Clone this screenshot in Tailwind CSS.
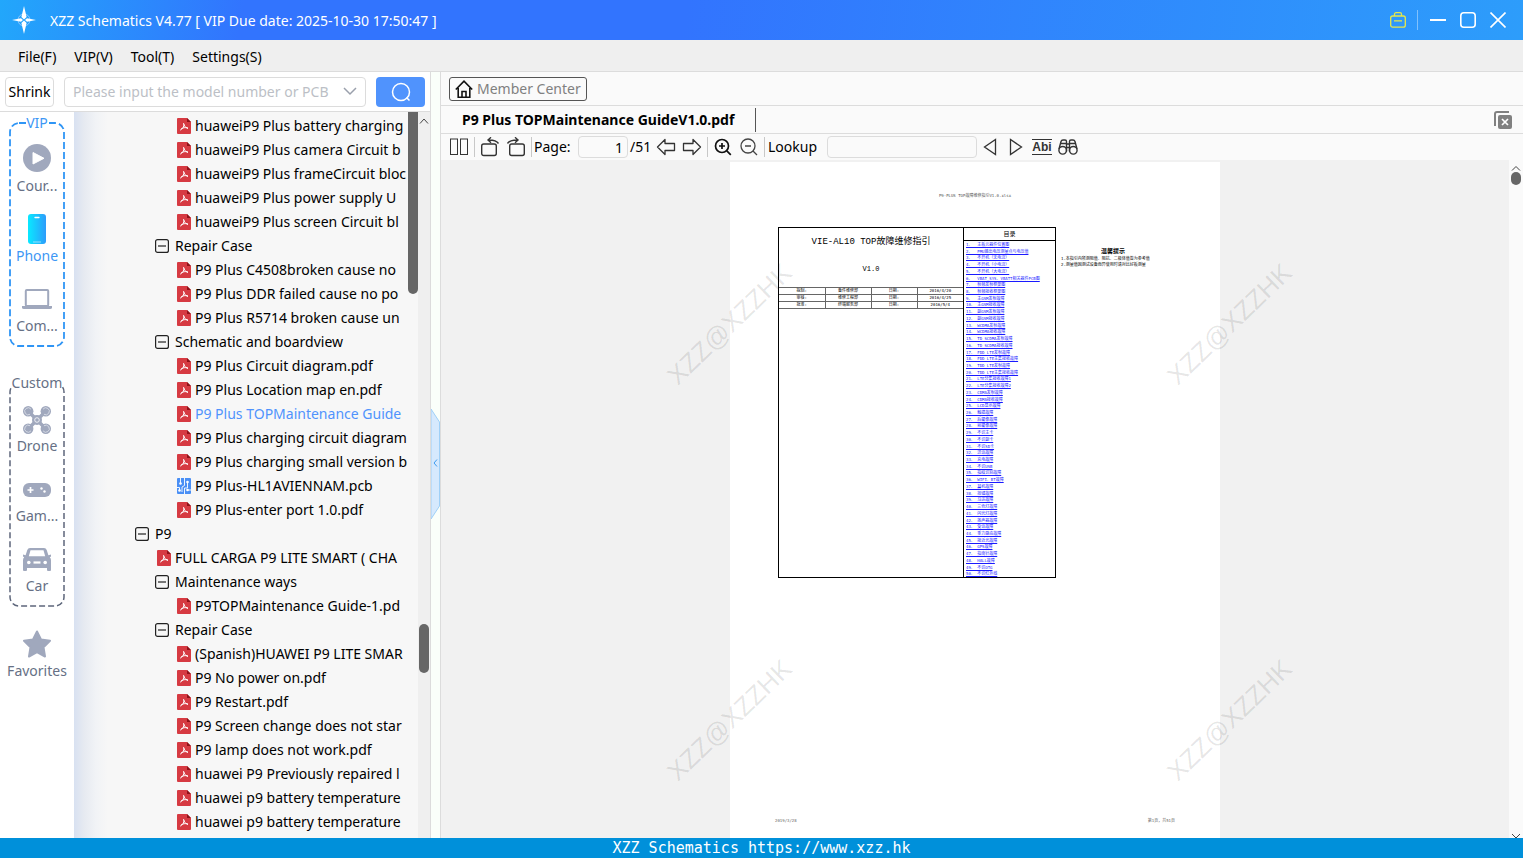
<!DOCTYPE html>
<html lang="en">
<head>
  <meta charset="UTF-8" />
  <title>XZZ Schematics V4.77</title>
  <meta name="viewport" content="width=device-width, initial-scale=1" />
  <script src="https://cdn.jsdelivr.net/npm/@tailwindcss/browser@4"></script>
</head>
<body class="h-screen flex flex-col overflow-hidden bg-[#fafafa] text-black text-[14px] leading-5 font-['Noto_Sans','Noto_Sans_CJK_SC',sans-serif]">

  <!-- Shared icons -->
  <svg class="hidden">
    <symbol id="pdf" viewBox="0 0 14 16">
      <path d="M1 0h9l4 4v11a1 1 0 0 1-1 1H1a1 1 0 0 1-1-1V1a1 1 0 0 1 1-1z" fill="#d63a42" />
      <path d="M10 0l4 4h-4z" fill="#8e1219" />
      <path d="M6.600 5.500c.6 2.200 1 3.300 4 5M7 6.500c.2 2-1.400 4.500-3.500 5.500M4.500 10.600c1.500-.9 3.500-1.200 6-.9" fill="none" stroke="#fff" stroke-width="1" stroke-linecap="round" />
    </symbol>
    <symbol id="pcb" viewBox="0 0 14 16">
      <rect width="14" height="16" rx="1" fill="#4a8ff5" />
      <path d="M3.500 0v5.500M7.500 0v7.500L5 9v5M0 9.500h2.500V12M10.500 4.500V10H7.500v6M14 12h-3.500" fill="none" stroke="#fff" stroke-width=".9" />
      <g fill="#fff"><circle cx="3.500" cy="5.500" r="1.300" /><circle cx="10.500" cy="4" r="1.300" /><circle cx="2.500" cy="12.500" r="1.300" /><circle cx="10.500" cy="12" r="1.300" /></g>
    </symbol>
    <symbol id="minus" viewBox="0 0 14 14">
      <rect x=".6" y=".6" width="12.800" height="12.800" rx="2" fill="none" stroke="#222" stroke-width="1.200" />
      <path d="M3 7h8" stroke="#222" stroke-width="1.200" />
    </symbol>
  </svg>

  <!-- Title bar -->
  <header class="h-10 shrink-0 flex items-center pl-3 pr-[17px] text-white bg-[linear-gradient(100deg,#22a7fb_0%,#3274fe_16%,#3274fe_45%,#2d9dfb_100%)]">
    <svg class="w-6 h-7 mr-[14px]" viewBox="0 0 24 28">
      <circle cx="12" cy="14" r="6" fill="none" stroke="#8cc8ff" stroke-width="1" />
      <path d="M12 0l2.600 11L12 13.500 9.400 11zM12 28l2.600-11L12 14.500 9.400 17zM0 14l9-1.800L11 14l-2 1.800zM24 14l-9-1.800L13 14l2 1.800z" fill="#fff" />
    </svg>
    <h1 class="pt-[2px]">XZZ Schematics V4.77 [ VIP Due date: 2025-10-30 17:50:47 ]</h1>
    <div class="ml-auto flex items-center">
      <button aria-label="Toolbox">
        <svg class="w-4 h-4" viewBox="0 0 16 16" fill="none" stroke="#e6e84a" stroke-width="1.300"><rect x=".7" y="4" width="14.600" height="11.200" rx="2" /><path d="M4.500 4V2.200a1.500 1.500 0 0 1 1.500-1.500h4a1.500 1.500 0 0 1 1.500 1.500V4M4 8.800h8" /></svg>
      </button>
      <span class="w-px h-5 ml-[11px] mr-3 bg-white/40"></span>
      <button aria-label="Minimize"><svg class="w-4 h-4" viewBox="0 0 16 16"><path d="M0 8h16" stroke="#fff" stroke-width="2" /></svg></button>
      <button aria-label="Maximize" class="ml-[14px]"><svg class="w-4 h-4" viewBox="0 0 16 16"><rect x=".8" y=".8" width="14.400" height="14.400" rx="3" fill="none" stroke="#fff" stroke-width="1.600" /></svg></button>
      <button aria-label="Close" class="ml-[14px]"><svg class="w-4 h-4" viewBox="0 0 16 16"><path d="M.5.5l15 15M15.500.5l-15 15" stroke="#fff" stroke-width="1.600" /></svg></button>
    </div>
  </header>

  <!-- Menu bar -->
  <nav class="h-8 shrink-0 flex items-center gap-[18px] px-[18px] pt-[2px] bg-[#efefef] border-b border-[#dcdcdc]">
    <button>File(F)</button>
    <button>VIP(V)</button>
    <button>Tool(T)</button>
    <button>Settings(S)</button>
  </nav>

  <main class="flex-1 min-h-0 flex">

    <!-- Left panel -->
    <section class="w-[431px] shrink-0 flex flex-col border-r border-[#dcdcdc] bg-white">
      <form class="h-10 shrink-0 flex items-center px-[5px] border-b border-[#dcdcdc]">
        <button type="button" class="w-[49px] h-[30px] border border-[#dcdcdc] rounded">Shrink</button>
        <div class="ml-[10px] w-[302px] h-[30px] flex items-center border border-[#dcdcdc] rounded px-2">
          <input type="text" aria-label="Model number or PCB" placeholder="Please input the model number or PCB" class="w-[266px] h-6 outline-none placeholder:text-[#bcbfc6]" />
          <button type="button" aria-label="History" class="ml-auto"><svg class="w-[14px] h-4" viewBox="0 0 14 16"><path d="M1 4l6 6 6-6" fill="none" stroke="#9aa0ac" stroke-width="1.500" /></svg></button>
        </div>
        <button type="button" aria-label="Search" class="ml-auto w-[49px] h-[30px] flex items-center justify-center rounded-sm bg-[#5093fd]">
          <svg class="w-5 h-5" viewBox="0 0 20 20" fill="none" stroke="#fff" stroke-width="1.500"><circle cx="10" cy="10" r="8.500" /><path d="M15.500 15.500l3 3" /></svg>
        </button>
      </form>

      <div class="flex-1 min-h-0 flex">
        <!-- Device categories -->
        <aside class="w-[74px] shrink-0 pt-[10px] flex flex-col items-center text-[#667085]">
          <div class="relative w-14 pt-[18px] pb-[11px] flex flex-col items-center gap-[14px]">
            <svg class="absolute inset-0 w-full h-full" viewBox="0 0 56 225"><rect x="1" y="1" width="54" height="223" rx="9" fill="none" stroke="#2f95f5" stroke-width="1.800" stroke-dasharray="7 3" /></svg>
            <span class="absolute -top-[9px] bg-white text-[#3d97f5]">VIP</span>
            <button class="relative flex flex-col items-center">
              <span class="h-9 flex items-center"><svg class="w-7 h-7" viewBox="0 0 28 28"><circle cx="14" cy="14" r="14" fill="#a0a8bd" /><path d="M10 8.500v11.500l11-5.700z" fill="#fff" stroke="#fff" stroke-linejoin="round" /></svg></span>
              <span>Cour...</span>
            </button>
            <button class="relative flex flex-col items-center text-[#3d97f5]">
              <span class="h-9 pt-[2px] flex items-center"><svg class="w-[18px] h-[30px]" viewBox="0 0 18 30"><defs><linearGradient id="ph"><stop stop-color="#09e9ff" /><stop offset="1" stop-color="#2d9cfb" /></linearGradient></defs><rect width="18" height="30" rx="3" fill="url(#ph)" /><path d="M7 3.500h4" stroke="#fff" stroke-width="1.300" stroke-linecap="round" /><path d="M5 28h8" stroke="#b5eaff" stroke-width=".8" /></svg></span>
              <span>Phone</span>
            </button>
            <button class="relative flex flex-col items-center">
              <span class="h-9 pt-[2px] flex items-center"><svg class="w-[30px] h-5" viewBox="0 0 30 20"><rect x="3.800" y="1" width="22.400" height="16" rx="1" fill="none" stroke="#a0a8bd" stroke-width="2" /><path d="M0 17h30v1.500q0 1.500-2 1.500H2q-2 0-2-1.500z" fill="#a0a8bd" /></svg></span>
              <span>Com...</span>
            </button>
          </div>

          <div class="relative w-14 mt-[35px] pt-[18px] pb-[11px] flex flex-col items-center gap-[14px]">
            <svg class="absolute inset-0 w-full h-full" viewBox="0 0 56 225"><rect x="1" y="1" width="54" height="223" rx="9" fill="none" stroke="#5d667b" stroke-width="1.500" stroke-dasharray="6 3" /></svg>
            <span class="absolute -top-[9px] bg-white">Custom</span>
            <button class="relative flex flex-col items-center">
              <span class="h-9 pt-1 flex items-center"><svg class="w-7 h-7" viewBox="0 0 28 28"><path d="M6 6l16 16M22 6L6 22" stroke="#a0a8bd" stroke-width="3.500" /><g fill="#a0a8bd"><circle cx="5.200" cy="5.200" r="5.200" /><circle cx="22.800" cy="5.200" r="5.200" /><circle cx="5.200" cy="22.800" r="5.200" /><circle cx="22.800" cy="22.800" r="5.200" /><circle cx="14" cy="14" r="5" /></g><g fill="none" stroke="#dfe3ec" stroke-width=".8"><path d="M8 3.200A3.500 3.500 0 1 0 7 8.300M20 3.200A3.500 3.500 0 1 1 21 8.300M8 24.800A3.500 3.500 0 1 1 7 19.700M20 24.800A3.500 3.500 0 1 0 21 19.700" /><circle cx="14" cy="14" r="2.300" stroke="#fff" /></g></svg></span>
              <span>Drone</span>
            </button>
            <button class="relative flex flex-col items-center">
              <span class="h-9 pt-1 flex items-center"><svg class="w-7 h-[14px]" viewBox="0 0 28 14"><rect width="28" height="14" rx="6" fill="#a0a8bd" /><path d="M4.500 7h6M7.500 4v6" stroke="#fff" stroke-width="1.700" /><circle cx="18.500" cy="5.500" r="1.200" fill="#fff" /><circle cx="21.500" cy="8.500" r="1.200" fill="#fff" /></svg></span>
              <span>Gam...</span>
            </button>
            <button class="relative flex flex-col items-center">
              <span class="h-9 pt-[2px] flex items-center"><svg class="w-7 h-6" viewBox="0 0 28 24"><path d="M7 1h14q2 0 2.700 2l1.700 5.200 2.600-.7v2l-1.200.8q1.200 1 1.200 3V23q0 1-1 1h-2q-1 0-1-1v-2H4v2q0 1-1 1H1q-1 0-1-1v-9.700q0-2 1.200-3L0 9.500v-2l2.600.7L4.300 3Q5 1 7 1z" fill="#a0a8bd" /><path d="M7.500 3.300h13l1.700 6H5.800z" fill="#fff" /><circle cx="5.800" cy="15.500" r="1.800" fill="#fff" /><circle cx="22.200" cy="15.500" r="1.800" fill="#fff" /><path d="M10.500 15.500h7" stroke="#fff" stroke-width="2.200" /></svg></span>
              <span>Car</span>
            </button>
          </div>

          <button class="mt-[18px] flex flex-col items-center">
            <span class="h-9 pt-[2px] flex items-center"><svg class="w-7 h-7" viewBox="0 0 28 28"><path d="M14 1.500l4 8 9 1.300-6.500 6.400 1.500 9.300-8-4.300-8 4.300 1.500-9.300L1 10.800l9-1.300z" fill="#a0a8bd" stroke="#a0a8bd" stroke-width="2" stroke-linejoin="round" /></svg></span>
            <span>Favorites</span>
          </button>
        </aside>

        <!-- File tree -->
        <div class="flex-1 min-w-0 flex bg-[linear-gradient(90deg,#d8e1f1_0px,#e6eaf1_10px,#f1f3f6_22px,#f7f7f7_34px)]">
          <ul id="tree" class="w-[333px] pt-[2px] overflow-hidden whitespace-nowrap"></ul>
          <div class="w-[11px] flex justify-center"><span class="w-[10px] h-[182px] bg-[#666] rounded-b-full"></span></div>
          <div class="w-3 flex flex-col items-center bg-[#efefef]">
            <svg class="w-[10px] h-[18px]" viewBox="0 0 10 18"><path d="M1 11.500l4-4.500 4 4.500" fill="none" stroke="#444" /></svg>
            <span class="mt-[494px] w-[10px] h-[49px] bg-[#666] rounded-full"></span>
          </div>
        </div>
      </div>
    </section>

    <!-- Splitter -->
    <div class="w-[10px] shrink-0 flex items-center border-r border-[#dcdcdc] bg-[#fafffa]">
      <button aria-label="Collapse panel"><svg class="w-[9px] h-[110px] mt-[18px]" viewBox="0 0 9 110"><path d="M0 0l8.500 13v84L0 110z" fill="#d6e9fd" stroke="#9fd0f7" /><path d="M6 50.500L3 54l3 3.500" fill="none" stroke="#3f9cf0" /></svg></button>
    </div>

    <!-- Viewer -->
    <section class="flex-1 min-w-0 flex flex-col">
      <div class="h-[34px] shrink-0 flex items-center px-2 border-b border-[#dcdcdc]">
        <a href="#" class="h-6 flex items-center gap-1 px-[5px] border border-[#555] rounded-[3px] text-[#808080]">
          <svg class="w-[18px] h-[18px]" viewBox="0 0 18 18" fill="none" stroke="#111" stroke-width="1.600"><path d="M.8 9.500L9 1.200l8.200 8.300M3.200 8v9.200h11.600V8M7 17v-5.500h4V17" /></svg>
          Member Center
        </a>
      </div>

      <div class="h-7 shrink-0 flex items-center border-b border-[#dcdcdc]">
        <button class="h-6 px-[21px] border-r border-[#555] font-bold">P9 Plus TOPMaintenance GuideV1.0.pdf</button>
        <button aria-label="Close all" class="ml-auto mr-[11px]"><svg class="w-[18px] h-[18px]" viewBox="0 0 18 18"><path d="M1 15V3q0-2 2-2h12" fill="none" stroke="#808080" stroke-width="2" /><rect x="4" y="4" width="14" height="14" rx="2" fill="#808080" /><path d="M8 8l6 6M14 8l-6 6" stroke="#fff" stroke-width="1.700" /></svg></button>
      </div>

      <div class="h-[26px] shrink-0 flex items-center pl-[5px]">
        <button aria-label="Two pages" class="w-[26px] flex justify-center"><svg class="w-5 h-[18px]" viewBox="0 0 20 18" fill="none" stroke="#333"><rect x="1.500" y="1" width="7" height="15.500" /><rect x="11.500" y="1" width="7" height="15.500" /></svg></button>
        <span class="w-px h-5 mx-[2px] bg-[#c8c8c8]"></span>
        <button aria-label="Rotate left" class="w-[26px] flex justify-center"><svg class="w-5 h-5" viewBox="0 0 20 20" fill="none" stroke="#333" stroke-width="1.400"><rect x="1.700" y="7" width="14.600" height="11.500" rx="2" /><path d="M18.500 6.500Q16 2.800 8.500 3M11 .3L8 3l3 2.700" /></svg></button>
        <button aria-label="Rotate right" class="w-[26px] flex justify-center"><svg class="w-5 h-5" viewBox="0 0 20 20" fill="none" stroke="#333" stroke-width="1.400"><rect x="3.700" y="7" width="14.600" height="11.500" rx="2" /><path d="M1.500 6.500Q4 2.800 11.500 3M9 .3L12 3 9 5.700" /></svg></button>
        <span class="w-px h-5 mx-[2px] bg-[#c8c8c8]"></span>
        <label for="page" class="w-[44px]">Page:</label>
        <input id="page" type="text" value="1" class="w-[50px] h-[22px] border border-[#dcdcdc] rounded-sm px-1 text-right outline-none" />
        <span class="w-[25px] pl-[2px]">/51</span>
        <button aria-label="Previous page" class="w-[26px] flex justify-center"><svg class="w-5 h-[18px]" viewBox="0 0 20 18" fill="none" stroke="#333" stroke-width="1.300"><path d="M1.500 9L9 1.500V5.500h9.500v7H9v4z" stroke-linejoin="round" /></svg></button>
        <button aria-label="Next page" class="w-[26px] flex justify-center"><svg class="w-5 h-[18px]" viewBox="0 0 20 18" fill="none" stroke="#333" stroke-width="1.300"><path d="M18.500 9L11 1.500V5.500H1.500v7H11v4z" stroke-linejoin="round" /></svg></button>
        <span class="w-px h-5 mx-[2px] bg-[#c8c8c8]"></span>
        <button aria-label="Zoom in" class="w-[26px] flex justify-center"><svg class="w-[18px] h-[18px]" viewBox="0 0 18 18" fill="none" stroke="#111" stroke-width="1.700"><circle cx="8" cy="8" r="6.500" /><path d="M12.800 12.800l4 4M5 8h6M8 5v6" /></svg></button>
        <button aria-label="Zoom out" class="w-[26px] flex justify-center"><svg class="w-[18px] h-[18px]" viewBox="0 0 18 18" fill="none" stroke="#444" stroke-width="1.300"><circle cx="8" cy="8" r="7" /><path d="M13 13l4 4M5 8h6" /></svg></button>
        <span class="w-px h-5 mx-[2px] bg-[#c8c8c8]"></span>
        <label for="lookup" class="w-[60px] pl-px">Lookup</label>
        <input id="lookup" type="text" class="w-[150px] h-[22px] border border-[#dcdcdc] rounded-sm px-1 outline-none" />
        <button aria-label="Find previous" class="w-[26px] flex justify-center"><svg class="w-[14px] h-[18px]" viewBox="0 0 14 18" fill="none" stroke="#333" stroke-width="1.300"><path d="M12.500 1.500v15L1.500 9z" /></svg></button>
        <button aria-label="Find next" class="w-[26px] flex justify-center"><svg class="w-[14px] h-[18px]" viewBox="0 0 14 18" fill="none" stroke="#333" stroke-width="1.300"><path d="M1.500 1.500v15L12.500 9z" /></svg></button>
        <button class="w-[26px] flex justify-center"><span class="h-4 border-y border-[#333] text-[12px] leading-[14px] font-bold text-[#333] font-['Liberation_Sans',sans-serif]">Abi</span></button>
        <button aria-label="Find in all" class="w-[26px] flex justify-center"><svg class="w-5 h-4" viewBox="0 0 20 16" fill="none" stroke="#333" stroke-width="1.400"><path d="M1 10L3 2.500Q3.500 1 5 1h2q1.500 0 1.500 1.500v10M19 10l-2-7.500Q16.500 1 15 1h-2q-1.500 0-1.500 1.500v10M8.500 5h3M8.500 8.500h3M3 4.500h5.500M11.500 4.500H17" /><circle cx="4.700" cy="11.300" r="3.800" /><circle cx="15.300" cy="11.300" r="3.800" /></svg></button>
      </div>

      <div class="flex-1 min-h-0 flex bg-[#f1f1f1]">
        <div class="relative flex-1 flex justify-center pt-[2px] overflow-hidden">

          <!-- Document page -->
          <article class="w-[490px] h-[676px] flex flex-col bg-white pt-[31px] px-[45px] text-[4px] leading-[6px] font-['DejaVu_Sans_Mono','Noto_Sans_CJK_SC',monospace]">
            <p class="text-center text-[#555]">P9-PLUS TOP故障维修指引V1.0.xlsx</p>
            <div class="mt-[28px] ml-[3px] flex items-start">
              <div class="w-[278px] shrink-0 flex border border-black">
                <div class="w-[184px] text-center">
                  <h2 class="pt-[6px] text-[9px] leading-4 font-['Liberation_Mono','Noto_Sans_CJK_SC',monospace]">VIE-AL10 TOP故障维修指引</h2>
                  <p class="pt-[13px] text-[7px] leading-3 font-['Liberation_Mono',monospace]">V1.0</p>
                  <table class="w-full mt-[12px] border-collapse border-y border-[#666] text-[4px] leading-[6px]">
                    <tr class="border-b border-[#666]"><td class="w-1/4 border-r border-[#666]">拟制:</td><td class="w-1/4 border-r border-[#666]">备件维修部</td><td class="w-1/4 border-r border-[#666]">日期:</td><td>2016/4/20</td></tr>
                    <tr class="border-b border-[#666]"><td class="border-r border-[#666]">审核:</td><td class="border-r border-[#666]">维修工程部</td><td class="border-r border-[#666]">日期:</td><td>2016/4/25</td></tr>
                    <tr><td class="border-r border-[#666]">批准:</td><td class="border-r border-[#666]">终端服务部</td><td class="border-r border-[#666]">日期:</td><td>2016/5/4</td></tr>
                  </table>
                </div>
                <div class="flex-1 border-l border-black">
                  <h3 class="h-[13px] border-b border-black text-center text-[6px] leading-3">目录</h3>
                  <ol id="toc" class="h-[336px] grid grid-rows-[repeat(50,1fr)] leading-[7px] text-[#1a1aff]"></ol>
                </div>
              </div>
              <div class="pt-[21px] pl-[5px] whitespace-nowrap">
                <h3 class="w-[104px] pb-[2px] text-center text-[6px] font-bold">温馨提示</h3>
                <p>1.本指引内所测阻值、阻抗、二极体值皆为参考值</p>
                <p>2.测量值因测试设备而异使用时请对比好板测量</p>
              </div>
            </div>
            <div class="mt-auto pb-[14px] flex justify-between text-[#666]"><span>2019/3/28</span><span>第1页，共51页</span></div>
          </article>

          <!-- Watermarks -->
          <div class="absolute left-1/2 top-0 -ml-[348px] w-[204px] h-[328px] flex items-center justify-center text-[26px] text-black/10 pointer-events-none font-['Liberation_Sans',sans-serif]"><span class="-rotate-[44deg]">XZZ@XZZHK</span></div>
          <div class="absolute left-1/2 top-0 ml-[152px] w-[204px] h-[328px] flex items-center justify-center text-[26px] text-black/10 pointer-events-none font-['Liberation_Sans',sans-serif]"><span class="-rotate-[44deg]">XZZ@XZZHK</span></div>
          <div class="absolute left-1/2 top-[396px] -ml-[348px] w-[204px] h-[328px] flex items-center justify-center text-[26px] text-black/10 pointer-events-none font-['Liberation_Sans',sans-serif]"><span class="-rotate-[44deg]">XZZ@XZZHK</span></div>
          <div class="absolute left-1/2 top-[396px] ml-[152px] w-[204px] h-[328px] flex items-center justify-center text-[26px] text-black/10 pointer-events-none font-['Liberation_Sans',sans-serif]"><span class="-rotate-[44deg]">XZZ@XZZHK</span></div>
        </div>
        <div class="w-[14px] flex flex-col items-center bg-[#fafafa]">
          <svg class="w-[10px] h-3" viewBox="0 0 10 12"><path d="M1 10.500L5 6.500l4 4" fill="none" stroke="#444" /></svg>
          <span class="w-[10px] h-[13px] rounded-full bg-[#666]"></span>
          <svg class="mt-auto w-[10px] h-1" viewBox="0 0 10 4"><path d="M1 0l4 4 4-4" fill="none" stroke="#444" /></svg>
        </div>
      </div>
    </section>
  </main>

  <footer class="h-5 shrink-0 bg-[#0090da] text-white text-center text-[15px] leading-5 font-['DejaVu_Sans_Mono',monospace]">XZZ Schematics https://www.xzz.hk</footer>

  <script>
    // [indent, icon, name]
    const rows = [
      [3, 'pdf', 'huaweiP9 Plus battery charging'],
      [3, 'pdf', 'huaweiP9 Plus camera Circuit b'],
      [3, 'pdf', 'huaweiP9 Plus frameCircuit bloc'],
      [3, 'pdf', 'huaweiP9 Plus power supply U'],
      [3, 'pdf', 'huaweiP9 Plus screen Circuit bl'],
      [1, 'minus', 'Repair Case'],
      [3, 'pdf', 'P9 Plus C4508broken cause no'],
      [3, 'pdf', 'P9 Plus DDR failed cause no po'],
      [3, 'pdf', 'P9 Plus R5714 broken cause un'],
      [1, 'minus', 'Schematic and boardview'],
      [3, 'pdf', 'P9 Plus Circuit diagram.pdf'],
      [3, 'pdf', 'P9 Plus Location map en.pdf'],
      [3, 'pdf', 'P9 Plus TOPMaintenance Guide'],
      [3, 'pdf', 'P9 Plus charging circuit diagram'],
      [3, 'pdf', 'P9 Plus charging small version b'],
      [3, 'pcb', 'P9 Plus-HL1AVIENNAM.pcb'],
      [3, 'pdf', 'P9 Plus-enter port 1.0.pdf'],
      [0, 'minus', 'P9'],
      [2, 'pdf', 'FULL CARGA P9 LITE SMART ( CHA'],
      [1, 'minus', 'Maintenance ways'],
      [3, 'pdf', 'P9TOPMaintenance Guide-1.pd'],
      [1, 'minus', 'Repair Case'],
      [3, 'pdf', '(Spanish)HUAWEI P9 LITE SMAR'],
      [3, 'pdf', 'P9 No power on.pdf'],
      [3, 'pdf', 'P9 Restart.pdf'],
      [3, 'pdf', 'P9 Screen change does not star'],
      [3, 'pdf', 'P9 lamp does not work.pdf'],
      [3, 'pdf', 'huawei P9 Previously repaired l'],
      [3, 'pdf', 'huawei p9 battery temperature'],
      [3, 'pdf', 'huawei p9 battery temperature']
    ];
    const indents = ['pl-[61px] gap-[6px]', 'pl-[81px] gap-[6px]', 'pl-[83px] gap-1', 'pl-[103px] gap-1'];
    document.getElementById('tree').innerHTML = rows.map(([level, icon, name], i) => `
      <li class="h-6 flex items-center ${indents[level]} ${i === 12 ? 'text-[#5093fd]' : ''}">
        <svg class="w-[14px] shrink-0 ${icon === 'minus' ? 'h-[14px]' : 'h-4'}"><use href="#${icon}" /></svg><span>${name}</span>
      </li>`).join('');

    const toc = ['主板元器件位置图', 'PMU输出电压测量点与电压值', '不开机（无电流）', '不开机（小电流）', '不开机（大电流）',
      'VBAT_SYS、VBATT相关器件PCB图', '射频发射框架图', '射频接收框架图', '主GSM发射故障', '主GSM接收故障',
      '副GSM发射故障', '副GSM接收故障', 'WCDMA发射故障', 'WCDMA接收故障', 'TD SCDMA发射故障', 'TD SCDMA接收故障',
      'FDD LTE发射故障', 'FDD LTE主集接收故障', 'TDD LTE发射故障', 'TDD LTE主集接收故障', 'LTE分集接收故障1', 'LTE分集接收故障2',
      'CDMA发射故障', 'CDMA接收故障', 'LCD显示故障', '触摸故障', '后摄像故障', '前摄像故障', '不识主卡', '不识副卡',
      '不识SD卡', '送话故障', '充电故障', '不识USB', '指纹识别故障', 'WIFI、BT故障', '耳机故障', '按键故障', '马达故障',
      '三色灯故障', '闪光灯故障', '扬声器故障', '受话故障', '重力感应故障', '接近光故障', 'GPS故障', '指南针故障',
      'HALL故障', '不识OTG', '不识红外线'];
    document.getElementById('toc').innerHTML = toc.map((name, i) =>
      `<li class="min-h-0 pl-[2px] whitespace-pre"><a href="#" class="underline">${(i + 1 + '、').padEnd(4)}${name}</a></li>`).join('');
  </script>
</body>
</html>
